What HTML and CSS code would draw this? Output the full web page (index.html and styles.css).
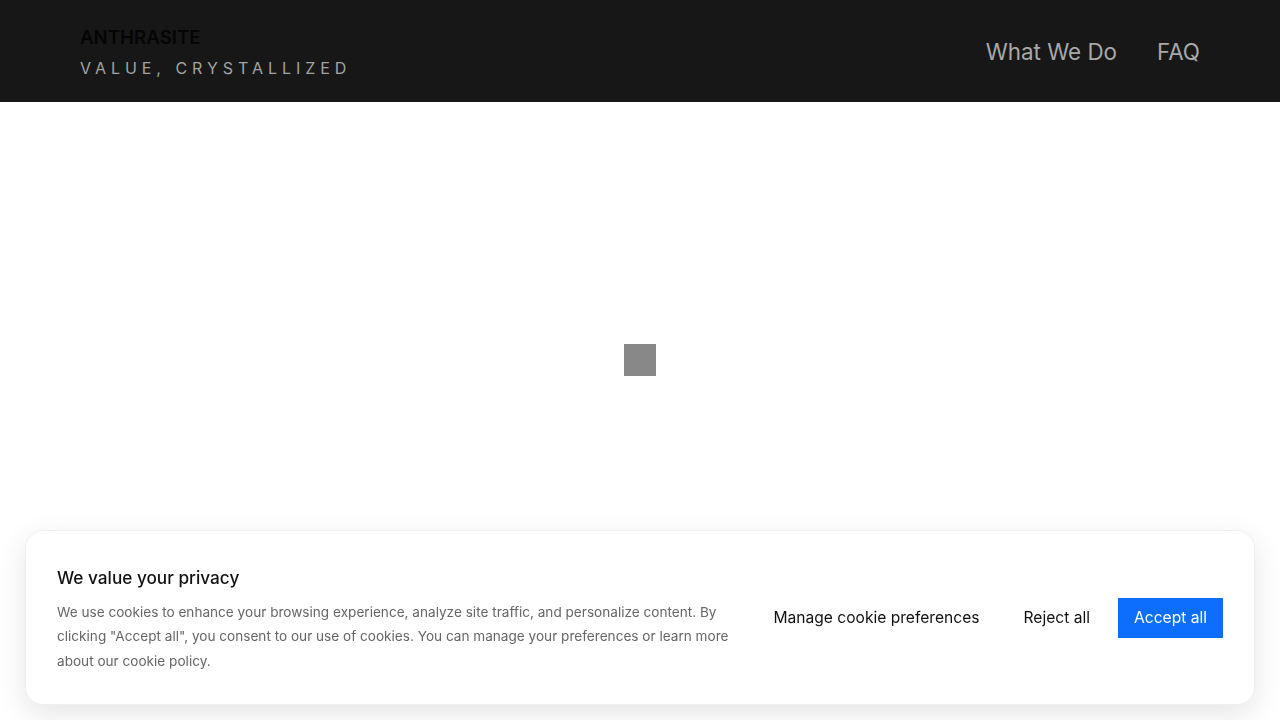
FILE: index.html
```html
<!DOCTYPE html>
<html lang="en">
<head>
<meta charset="utf-8">
<title>Anthrasite</title>
<link rel="stylesheet" href="styles.css">
</head>
<body>
<header class="site-header">
  <div class="brand">
    <div class="brand-name">ANTHRASITE</div>
    <div class="brand-tagline">VALUE, CRYSTALLIZED</div>
  </div>
  <nav class="nav">
    <a class="nav-link" href="#">What We Do</a>
    <a class="nav-link" href="#">FAQ</a>
  </nav>
</header>
<main class="main">
  <div class="loader"></div>
</main>
<div class="cookie">
  <div class="cookie-text">
    <h2 class="cookie-title">We value your privacy</h2>
    <p class="cookie-body">We use cookies to enhance your browsing experience, analyze site traffic, and personalize content. By clicking "Accept all", you consent to our use of cookies. You can manage your preferences or learn more about our cookie policy.</p>
  </div>
  <div class="cookie-actions">
    <button class="btn btn-plain">Manage cookie preferences</button>
    <button class="btn btn-plain">Reject all</button>
    <button class="btn btn-primary">Accept all</button>
  </div>
</div>
</body>
</html>
```
FILE: styles.css
```css
* { box-sizing: border-box; }
html, body { margin: 0; padding: 0; }
body {
  font-family: Inter, "Noto Sans", sans-serif;
  background: #ffffff;
  height: 720px;
  overflow: hidden;
}
.site-header {
  height: 102px;
  background: #171717;
  display: flex;
  align-items: center;
  justify-content: space-between;
  padding: 0 80px;
}
.brand { display: flex; flex-direction: column; gap: 8px; padding-top: 4px; }
.brand-name {
  color: #050505;
  font-weight: 600;
  font-size: 18.7px;
  line-height: 22px;
}
.brand-tagline {
  color: #a3a3a3;
  font-size: 16px;
  line-height: 22px;
  letter-spacing: 0.31em;
  font-weight: 400;
}
.nav { display: flex; gap: 40px; }
.nav-link {
  color: #a8a8a8;
  text-decoration: none;
  font-size: 22.4px;
  font-weight: 400;
}
.main {
  height: 618px;
  display: flex;
  align-items: center;
  justify-content: center;
  padding-bottom: 102px;
}
.loader {
  width: 32px;
  height: 32px;
  background: #888888;
}
.cookie {
  position: fixed;
  left: 25px;
  right: 25px;
  bottom: 15px;
  height: 175px;
  background: #fff;
  border: 1px solid #f0f0f0;
  border-radius: 18px;
  box-shadow: 0 10px 30px rgba(0,0,0,0.10);
  display: flex;
  align-items: center;
  justify-content: space-between;
  padding: 4px 31px 0 31px;
}
.cookie-text { width: 680px; }
.cookie-title {
  margin: 0 0 10px;
  font-size: 17.2px;
  line-height: 24px;
  font-weight: 500;
  color: #111;
}
.cookie-body {
  margin: 0;
  font-size: 13.6px;
  line-height: 24.5px;
  color: #666;
}
.cookie-actions { display: flex; gap: 12px; align-items: center; margin-top: -4px; }
.btn {
  font-family: inherit;
  font-size: 15.6px;
  height: 40px;
  padding: 0 16px;
  border: 0;
  border-radius: 0;
  background: transparent;
  color: #111;
  cursor: pointer;
}
.btn-primary { background: #0d6efd; color: #fff; }
```
